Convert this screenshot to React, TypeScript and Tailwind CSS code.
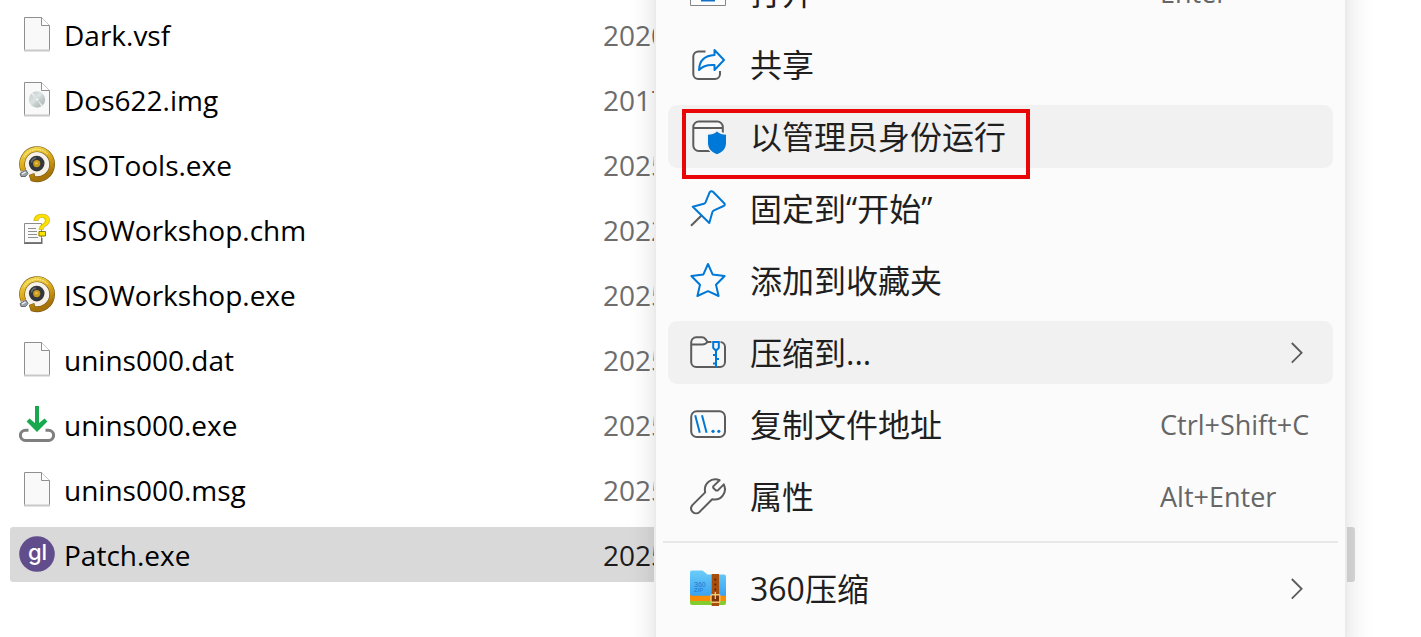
import type { ReactNode } from "react";

const Svg = ({ children }: { children: ReactNode }) => (
  <svg width="36" height="37" viewBox="0 0 36 37" fill="none" className="shrink-0" aria-hidden="true">
    {children}
  </svg>
);

/* ---------- file icons ---------- */

const Sheet = () => (
  <>
    <path d="M5.5 1.5H22.5L30.5 9.5V34.5H5.5Z" fill="#f9f9f9" stroke="#8f8f8f" />
    <path d="M22.5 1.5V9.5H30.5" fill="#fff" stroke="#8f8f8f" />
    <path d="M5 34.5H31" stroke="#c8c8c8" strokeWidth="2" />
  </>
);

const DocIcon = () => (
  <Svg>
    <Sheet />
  </Svg>
);

const ImageFileIcon = () => (
  <Svg>
    <defs>
      <linearGradient id="disc" x1="0" y1="0" x2="1" y2="1">
        <stop offset="0" stopColor="#c3c9c9" />
        <stop offset="0.45" stopColor="#dde3e3" />
        <stop offset="0.6" stopColor="#c6cdcd" />
        <stop offset="1" stopColor="#a7afaf" />
      </linearGradient>
    </defs>
    <Sheet />
    <circle cx="18" cy="18.5" r="8.2" fill="url(#disc)" />
    <path d="M18 18.5L12 12.8L14 11.4Z" fill="#e6ebeb" />
    <path d="M18 18.5L24 24.2L22.3 25.5Z" fill="#e6ebeb" />
    <circle cx="18" cy="18.5" r="1.8" fill="#f1f4f4" stroke="#c3c9c9" strokeWidth="0.6" />
  </Svg>
);

const IsoIcon = () => (
  <Svg>
    <defs>
      <linearGradient id="gold" x1="0" y1="0" x2="0.4" y2="1">
        <stop offset="0" stopColor="#f4dc50" />
        <stop offset="0.5" stopColor="#dcaa1c" />
        <stop offset="1" stopColor="#a87408" />
      </linearGradient>
    </defs>
    <circle cx="18" cy="18" r="12" fill="#f6f2ea" />
    <path d="M4.5 24.5A15 15 0 1 1 14 32.6L12.5 28" stroke="#7a5a14" strokeWidth="5.8" />
    <path d="M4.5 24.5A15 15 0 1 1 14 32.6L12.8 28.4" stroke="url(#gold)" strokeWidth="4.6" />
    <path d="M5 11A14.6 14.6 0 0 1 28.5 8" stroke="#f9ec92" strokeWidth="1.2" strokeDasharray="1.6 1" />
    <path d="M1 27.5L7 24L9 27.5L6.5 30.5H2Z" fill="#9ba3aa" stroke="#4c5258" strokeWidth="0.8" />
    <path d="M3 28L6.5 26" stroke="#f5f7f8" strokeWidth="1.4" />
    <circle cx="17.7" cy="17.6" r="7.8" fill="#33363a" />
    <path d="M12.4 16.5A5.6 5.6 0 0 1 17 12" stroke="#686d72" strokeWidth="1.4" />
    <circle cx="17.7" cy="17.6" r="3.6" fill="#c99a1c" />
    <circle cx="17.4" cy="17.2" r="1.3" fill="#e6c14a" />
  </Svg>
);

const HelpFileIcon = () => (
  <Svg>
    <path d="M5.5 12.5H22.5V31.5H5.5Z" fill="#fafafa" stroke="#8b8b8b" />
    <path d="M5 32.2H22.8V27" stroke="#6e6e6e" strokeWidth="1.4" />
    <path d="M9 17.5H17M9 20.5H18M9 23.5H18M9 26.5H19" stroke="#8f8f8f" />
    <text
      x="13.4"
      y="24.6"
      fontFamily="Liberation Sans, sans-serif"
      fontWeight="700"
      fontSize="31"
      fill="#fde100"
      stroke="#c4b010"
      strokeWidth="0.6"
    >
      ?
    </text>
    <path d="M20 20.5H26.5V25H20Z" fill="#fde100" stroke="#6d6208" strokeWidth="0.8" />
  </Svg>
);

const UninstallIcon = () => (
  <Svg>
    <path
      d="M9.5 24.2H6.5A5.1 5.1 0 0 0 6.5 34.4H29.5A5.1 5.1 0 0 0 29.5 24.2H26.5"
      stroke="#7f7f7f"
      strokeWidth="3"
    />
    <path d="M16 0H20V17L25.5 12.6L28.4 15.6L18 26L7.6 15.6L10.5 12.6L16 17Z" fill="#18a94f" />
  </Svg>
);

const PatchIcon = () => (
  <Svg>
    <circle cx="18" cy="18" r="17.8" fill="#614c8c" />
    <text
      x="18.5"
      y="24"
      textAnchor="middle"
      fontFamily="Inter, sans-serif"
      fontWeight="500"
      fontSize="22"
      fill="#fff"
    >
      gl
    </text>
  </Svg>
);

/* ---------- menu icons ---------- */

const GREY = "#5c5c5c";
const BLUE = "#0078d7";

const OpenIcon = () => (
  <Svg>
    <path d="M0.5 4.5H35.5V31.5H0.5Z" fill="#fdfdfd" stroke="#858585" />
    <path d="M11 12H25V27.5H11Z" fill="#1272c8" />
  </Svg>
);

const ShareIcon = () => (
  <Svg>
    <path d="M15.5 5.5H8.5A5 5 0 0 0 3.3 10.5V28A5 5 0 0 0 8.3 33H25A5 5 0 0 0 30 28V25" stroke={GREY} strokeWidth="2" />
    <path
      d="M24.5 4L34 14L24.5 24V19C17.5 18.5 12.5 20 9 24C9.3 14.5 15 9.5 24.5 9Z"
      stroke={BLUE}
      strokeWidth="2"
      strokeLinejoin="round"
    />
  </Svg>
);

const AdminIcon = () => (
  <Svg>
    <rect x="3.3" y="3.5" width="29.5" height="29.5" rx="5.5" fill="#f8f8f8" stroke={GREY} strokeWidth="2" />
    <path d="M3.5 10H32.5" stroke={GREY} strokeWidth="2" />
    <path
      d="M27 13.5C24.5 15.7 21.5 16.7 18 16.8V25C18 30 21 34 27 36.3C33 34 36 30 36 25V16.8C32.5 16.7 29.5 15.7 27 13.5Z"
      fill={BLUE}
      stroke="#f2f2f2"
      strokeWidth="3"
      paintOrder="stroke"
    />
  </Svg>
);

const PinIcon = () => (
  <Svg>
    <path d="M11.5 25.5L1 35.8" stroke={GREY} strokeWidth="2" />
    <path
      d="M23 1.8L34.2 13.2Q35.6 15 33.6 16L24 20.3Q22.8 20.9 22.4 22L19.3 33L2.8 16.8L13.8 13.8Q15 13.4 15.6 12.2L19.6 2.4Q21 0.2 23 1.8Z"
      stroke={BLUE}
      strokeWidth="2"
      strokeLinejoin="round"
    />
  </Svg>
);

const StarIcon = () => (
  <Svg>
    <path
      d="M18 2L22.6 12.4L34.6 14L26 22.8L28.6 34L18 29.2L7.4 34L10 22.8L1.4 14L13.4 12.4Z"
      stroke={BLUE}
      strokeWidth="2"
      strokeLinejoin="round"
    />
  </Svg>
);

const ZipFolderIcon = () => (
  <Svg>
    <path
      d="M1.2 8.5A5 5 0 0 1 6.2 3.3H12Q14 3.3 15.3 4.8L17.6 8H30A5 5 0 0 1 35 13V28A5 5 0 0 1 30 33H6.2A5 5 0 0 1 1.2 28Z"
      fill="#f6f6f6"
      stroke={GREY}
      strokeWidth="2"
    />
    <path d="M1.5 10.5H12.5Q15 10.5 17.8 8" stroke={GREY} strokeWidth="2" />
    <path d="M21.5 6.5H30.5V11H21.5Z" fill="#f6f6f6" />
    <path d="M23.2 8V13.8L25 15.8H27L28.8 13.8V8Z" stroke={BLUE} strokeWidth="2" />
    <path d="M26 16V33.5M26 21H23M26 25H29M26 29.5H23" stroke={BLUE} strokeWidth="2" />
  </Svg>
);

const CopyPathIcon = () => (
  <Svg>
    <rect x="1.2" y="5.3" width="33.8" height="25.7" rx="5.5" stroke={GREY} strokeWidth="2" />
    <path d="M5.2 9.3L9.8 26.7M12 9.3L16.6 26.7" stroke={BLUE} strokeWidth="2" />
    <circle cx="23" cy="25.3" r="1.6" fill={BLUE} />
    <circle cx="28.8" cy="25.3" r="1.6" fill={BLUE} />
  </Svg>
);

const WrenchIcon = () => (
  <Svg>
    <path
      d="M29.6 2.2C21.5 -1 13.2 5.5 15.2 14.4L2.6 26.9C-1.8 32 5 38.2 9.6 33.9L22.2 21.2C31 23.2 37.6 14.6 33.8 6.4L27.6 12.6H26L23.2 9.8V8.4Z"
      stroke={GREY}
      strokeWidth="2"
      strokeLinejoin="round"
    />
  </Svg>
);

const Zip360Icon = () => (
  <Svg>
    <defs>
      <linearGradient id="zipBlue" x1="0" y1="0" x2="0" y2="1">
        <stop offset="0" stopColor="#6bcdf8" />
        <stop offset="1" stopColor="#3aa3f2" />
      </linearGradient>
    </defs>
    <path d="M0 29H36V33Q36 35 34 35H2Q0 35 0 33Z" fill="#82cc2f" />
    <path d="M0 24H36V31H2Q0 31 0 29Z" fill="#fb8c05" />
    <path d="M0 2.5Q0 0.5 2 0.5H12.5L17.5 4.5H34Q36 4.5 36 6.5V25.7H2Q0 25.7 0 23.7Z" fill="url(#zipBlue)" />
    <text x="4" y="16.5" fontFamily="Liberation Sans, sans-serif" fontSize="7" fill="#1f78cf">
      360
    </text>
    <text x="4" y="22" fontFamily="Liberation Sans, sans-serif" fontSize="6" fill="#1f78cf">
      ZIP
    </text>
    <path d="M21.7 4H29V36H21.7Z" fill="#a84e0c" />
    <circle cx="25.3" cy="9.5" r="1" fill="#54240a" />
    <circle cx="25.3" cy="14.5" r="1" fill="#54240a" />
    <circle cx="25.3" cy="19.5" r="1" fill="#54240a" />
    <rect x="21" y="24.7" width="8.8" height="7.6" rx="1" fill="#7c3607" stroke="#f7c873" strokeWidth="1.4" />
    <path d="M25.3 22V29" stroke="#f7d48c" strokeWidth="1.2" />
  </Svg>
);

const Chevron = () => (
  <svg width="12" height="22" viewBox="0 0 12 22" fill="none" className="shrink-0" aria-hidden="true">
    <path d="M0.8 1L10.6 10.8L0.8 20.6" stroke="#5a5a5a" strokeWidth="1.8" />
  </svg>
);

/* ---------- data ---------- */

type FileRow = { name: string; year: string; icon: ReactNode; selected?: boolean };

const files: FileRow[] = [
  { name: "Dark.vsf", year: "2020", icon: <DocIcon /> },
  { name: "Dos622.img", year: "2017", icon: <ImageFileIcon /> },
  { name: "ISOTools.exe", year: "2025", icon: <IsoIcon /> },
  { name: "ISOWorkshop.chm", year: "2022", icon: <HelpFileIcon /> },
  { name: "ISOWorkshop.exe", year: "2025", icon: <IsoIcon /> },
  { name: "unins000.dat", year: "2025", icon: <DocIcon /> },
  { name: "unins000.exe", year: "2025", icon: <UninstallIcon /> },
  { name: "unins000.msg", year: "2025", icon: <DocIcon /> },
  { name: "Patch.exe", year: "2025", icon: <PatchIcon />, selected: true },
];

type ItemProps = {
  label: string;
  icon: ReactNode;
  shortcut?: string;
  submenu?: boolean;
  active?: boolean;
  marked?: boolean;
};

const items: ItemProps[] = [
  { label: "打开", icon: <OpenIcon />, shortcut: "Enter" },
  { label: "共享", icon: <ShareIcon /> },
  { label: "以管理员身份运行", icon: <AdminIcon />, active: true, marked: true },
  { label: "固定到“开始”", icon: <PinIcon /> },
  { label: "添加到收藏夹", icon: <StarIcon /> },
  { label: "压缩到...", icon: <ZipFolderIcon />, submenu: true, active: true },
  { label: "复制文件地址", icon: <CopyPathIcon />, shortcut: "Ctrl+Shift+C" },
  { label: "属性", icon: <WrenchIcon />, shortcut: "Alt+Enter" },
];

function MenuItem({ label, icon, shortcut, submenu, active, marked }: ItemProps) {
  return (
    <button
      type="button"
      role="menuitem"
      className={`relative flex h-[63px] w-full shrink-0 items-center rounded-[9px] pl-[22px] text-left ${
        active ? "bg-[#f1f1f1]" : ""
      }`}
    >
      {icon}
      <span className="ml-6 flex-1 whitespace-nowrap text-[32px] leading-10 text-[#1f1f1f]">{label}</span>
      {shortcut && (
        <span className="w-[173px] whitespace-nowrap text-[27px] leading-10 text-[#666666]">{shortcut}</span>
      )}
      {submenu && (
        <span className="pr-[30px]">
          <Chevron />
        </span>
      )}
      {marked && (
        <span className="pointer-events-none absolute top-1 left-[14px] h-[70px] w-[348px] border-4 border-[#e90606]" />
      )}
    </button>
  );
}

export default function App() {
  return (
    <main className="relative flex h-screen items-start overflow-hidden bg-white font-['Open_Sans','Noto_Sans_CJK_SC',sans-serif]">
      <table className="-mt-[3px] mr-[66px] ml-[10px] w-full table-fixed border-separate border-spacing-x-0 border-spacing-y-[10px] text-[28px] leading-10">
        <colgroup>
          <col className="w-[593px]" />
          <col />
        </colgroup>
        <tbody>
          {files.map((f) => (
            <tr key={f.name}>
              <td className={`h-[55px] rounded-l-[3px] p-0 ${f.selected ? "bg-[#d9d9d9]" : ""}`}>
                <div className="flex items-center gap-[9px] pl-[9px] text-black">
                  {f.icon}
                  <span>{f.name}</span>
                </div>
              </td>
              <td
                className={`h-[55px] rounded-r-[3px] p-0 ${
                  f.selected ? "bg-[#d9d9d9] text-[#1c1c1c]" : "text-[#6d6d6d]"
                }`}
              >
                {f.year}
              </td>
            </tr>
          ))}
        </tbody>
      </table>

      <div
        role="menu"
        className="absolute -top-[53px] right-[74px] left-[654px] flex flex-col gap-[9px] border-2 border-[#ebebeb] bg-[#fbfbfb] px-3 pt-3 pb-10 shadow-[0_0_26px_rgba(0,0,0,0.13)]"
      >
        {items.map((item) => (
          <MenuItem key={item.label} {...item} />
        ))}
        <div role="separator" className="-mx-[5px] mt-1 mb-[5px] h-[2px] shrink-0 bg-[#e8e8e8]" />
        <MenuItem label="360压缩" icon={<Zip360Icon />} submenu />
      </div>
    </main>
  );
}
